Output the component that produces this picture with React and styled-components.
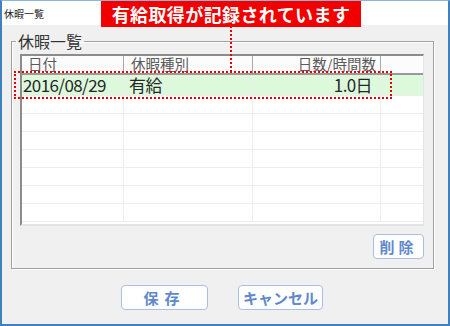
import React from 'react';
import styled, { createGlobalStyle } from 'styled-components';

const GlobalStyle = createGlobalStyle`
  html, body {
    margin: 0;
    padding: 0;
    background: #ffffff;
  }
  body {
    font-family: "Noto Sans CJK JP", "Noto Sans", sans-serif;
  }
`;

const Window = styled.div`
  position: relative;
  width: 450px;
  height: 326px;
  box-sizing: border-box;
  border: 2px solid #3f80c0;
  border-top: 1px solid #8fb4d8;
  display: flex;
  flex-direction: column;
  background: #f0f0f0;
`;

const TitleBar = styled.div`
  height: 24px;
  background: #ffffff;
  display: flex;
  align-items: center;
  padding-left: 2px;
  font-size: 10px;
  color: #222;
`;

const Body = styled.div`
  flex: 1;
  display: flex;
  flex-direction: column;
`;

const Group = styled.fieldset`
  margin: 8px 14px 0 9px;
  padding: 5px 9px 9px 8px;
  border: 1px solid #a0a0a0;
  box-shadow: inset 1px 1px 0 #ffffff, 1px 1px 0 #ffffff;
  min-width: 0;
`;

const Legend = styled.legend`
  font-size: 16px;
  line-height: 16px;
  color: #333;
  padding: 0 2px;
  margin-left: -4px;
`;

const List = styled.div`
  height: 172px;
  box-sizing: border-box;
  background: #ffffff;
  border-left: 2px solid #8c8c8c;
  border-top: 2px solid #8c8c8c;
  border-right: 1px solid #e4e4e4;
  border-bottom: 2px solid #e4e4e4;
  overflow: hidden;
`;

const cols = '102px 129px 128px 1fr';

const HeaderRow = styled.div`
  display: grid;
  grid-template-columns: ${cols};
  height: 17px;
  border-bottom: 2px solid #9a9a9a;
  background: #fcfcfc;
`;

const HeadCell = styled.div`
  font-size: 14.5px;
  line-height: 16px;
  color: #5a5a5a;
  padding: 0 ${p => (p.$right ? '4px' : '0')} 0 ${p => p.$pl || 0}px;
  text-align: ${p => (p.$right ? 'right' : 'left')};
  border-right: ${p => (p.$last ? 'none' : '1px solid #a8a8a8')};
  box-shadow: ${p => (p.$last ? 'none' : '1px 0 0 #ffffff')};
  white-space: nowrap;
`;

const Row = styled.div`
  display: grid;
  grid-template-columns: ${cols};
  height: ${p => (p.$first ? 20 : 17)}px;
  border-bottom: 1px solid #ededed;
  background: ${p => (p.$selected ? '#dcf9dc' : '#ffffff')};
`;

const Cell = styled.div`
  font-size: 17px;
  letter-spacing: -0.6px;
  line-height: 20px;
  color: #262626;
  padding: 0 ${p => (p.$right ? '8px' : '0')} 0 ${p => p.$pl || 0}px;
  text-align: ${p => (p.$right ? 'right' : 'left')};
  border-right: ${p => (p.$last ? 'none' : '1px solid #ededed')};
  white-space: nowrap;
`;

const ActionRow = styled.div`
  display: flex;
  justify-content: ${p => p.$center ? 'center' : 'flex-end'};
  gap: 30px;
  margin-top: ${p => p.$mt}px;
  padding-right: ${p => p.$pr || 0}px;
`;

const Button = styled.button`
  width: ${p => p.$w}px;
  height: 25px;
  box-sizing: border-box;
  background: #ffffff;
  border: 1px solid #a8c0e4;
  border-radius: 4px;
  font-family: "Noto Sans CJK JP", sans-serif;
  font-size: 15px;
  font-weight: 700;
  color: #6088cc;
  letter-spacing: ${p => p.$ls || 0}px;
  padding: 0;
  display: flex;
  align-items: center;
  justify-content: center;
`;

const Callout = styled.div`
  position: absolute;
  left: 99px;
  top: 0;
  width: 260px;
  height: 26px;
  background: #f20000;
  color: #ffffff;
  font-size: 18px;
  font-weight: 700;
  letter-spacing: 0.4px;
  display: flex;
  align-items: center;
  justify-content: center;
`;

const Leader = styled.div`
  position: absolute;
  left: 228px;
  top: 25px;
  width: 0;
  height: 46px;
  border-left: 2px dotted #e60000;
`;

const Marker = styled.div`
  position: absolute;
  left: 12px;
  top: 70px;
  width: 378px;
  height: 28px;
  box-sizing: border-box;
  border: 2px dotted #e60000;
`;

const emptyRows = [0, 1, 2, 3, 4, 5, 6];

export default function App() {
  return (
    <>
      <GlobalStyle />
      <Window>
        <TitleBar>休暇一覧</TitleBar>
        <Body>
          <Group>
            <Legend>休暇一覧</Legend>
            <List>
              <HeaderRow>
                <HeadCell $pl={6}>日付</HeadCell>
                <HeadCell $pl={7}>休暇種別</HeadCell>
                <HeadCell $right>日数/時間数</HeadCell>
                <HeadCell $last />
              </HeaderRow>
              <Row $first $selected>
                <Cell $pl={1}>2016/08/29</Cell>
                <Cell $pl={5}>有給</Cell>
                <Cell $right>1.0日</Cell>
                <Cell $last />
              </Row>
              {emptyRows.map(i => (
                <Row key={i}>
                  <Cell />
                  <Cell />
                  <Cell />
                  <Cell $last />
                </Row>
              ))}
            </List>
            <ActionRow $mt={8}>
              <Button $w={51} $ls={4}>削除</Button>
            </ActionRow>
          </Group>
          <ActionRow $center $mt={16} $pr={6}>
            <Button $w={87} $ls={6}>保存</Button>
            <Button $w={85}>キャンセル</Button>
          </ActionRow>
        </Body>
        <Callout>有給取得が記録されています</Callout>
        <Leader />
        <Marker />
      </Window>
    </>
  );
}
